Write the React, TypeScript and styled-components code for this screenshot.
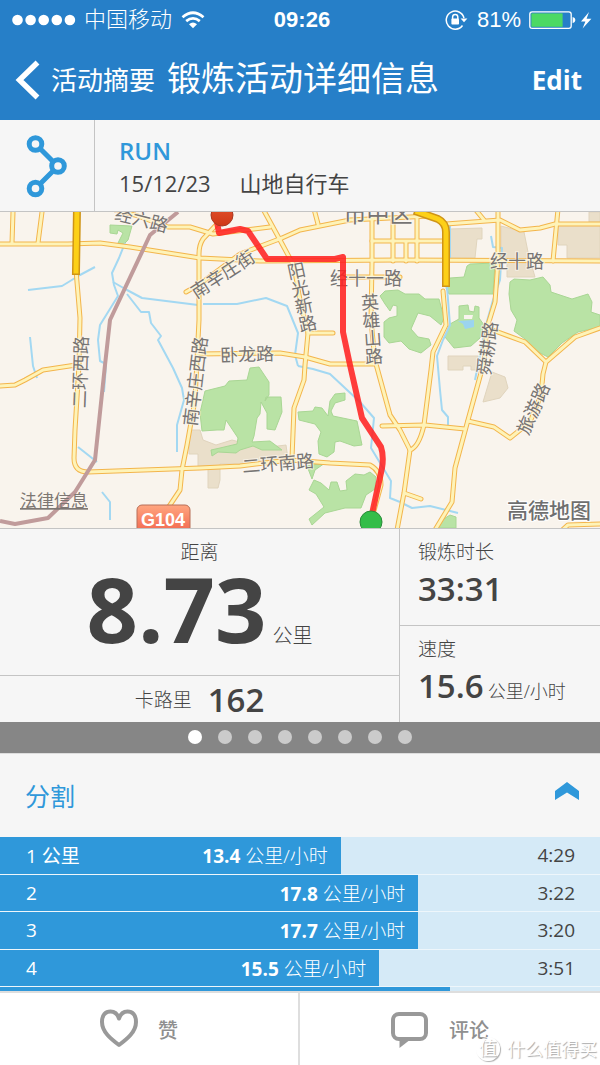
import React from "react";
import styled, { createGlobalStyle } from "styled-components";

const blue = "#2f98da";
const rule = "#c4c4c4";
const ink = "#444444";

const GlobalStyle = createGlobalStyle`
  *, *::before, *::after { box-sizing: border-box; }
  body {
    margin: 0;
    background: #f6f6f6;
    color: ${ink};
    font-family: "Open Sans", "Noto Sans CJK SC", sans-serif;
  }
  button, a, input { font: inherit; color: inherit; }
  button { border: 0; padding: 0; background: none; cursor: pointer; }
`;

const Screen = styled.div`
  display: flex;
  flex-direction: column;
  height: 100vh;
  position: relative;
  overflow: hidden;
`;

/* ---------- header ---------- */

const Header = styled.header`
  flex: none;
  height: 120px;
  background: #267fc8;
  color: #ffffff;
`;

const StatusBar = styled.div`
  display: grid;
  grid-template-columns: 1fr auto 1fr;
  align-items: center;
  height: 40px;
  padding: 0 8px 0 12px;
  font-family: "Liberation Sans", "Noto Sans CJK SC", sans-serif;
  font-size: 22px;
  line-height: 40px;
`;

const StatusGroup = styled.div<{ $end?: boolean }>`
  display: flex;
  align-items: center;
  justify-content: ${(p) => (p.$end ? "flex-end" : "flex-start")};
  gap: 8px;
`;

const Carrier = styled.span`
  font-weight: 300;
`;

const Clock = styled.time`
  font-weight: 700;
`;

const NavBar = styled.nav`
  display: flex;
  align-items: center;
  height: 80px;
  padding: 0 18px 0 15px;
`;

const BackLink = styled.a`
  display: flex;
  align-items: center;
  gap: 10px;
  font-size: 26px;
  line-height: 40px;
  text-decoration: none;
`;

const Title = styled.h1`
  flex: 1;
  margin: 0 0 4px 12px;
  font-size: 34px;
  line-height: 48px;
  font-weight: 400;
  white-space: nowrap;
`;

const EditButton = styled.button`
  && {
    font-size: 26px;
    font-weight: 700;
  }
`;

/* ---------- activity ---------- */

const Activity = styled.section`
  flex: none;
  display: flex;
  height: 92px;
  border-bottom: 1px solid ${rule};
`;

const ActivityIcon = styled.div`
  display: flex;
  justify-content: center;
  width: 95px;
  padding-top: 14px;
  border-right: 1px solid ${rule};
`;

const ActivityText = styled.div`
  padding: 15px 0 0 24px;
`;

const ActivityType = styled.h2`
  margin: 0;
  color: ${blue};
  font-size: 24px;
  line-height: 32px;
  font-weight: 600;
`;

const ActivityMeta = styled.p`
  display: flex;
  gap: 29px;
  margin: 0;
  font-size: 22px;
  line-height: 32px;
`;

/* ---------- map ---------- */

const MapView = styled.svg`
  flex: none;
  display: block;
  width: 100%;
  height: 316px;
  background: #f9f4ed;
`;

const MapText = styled.text<{ $stacked?: boolean; $size?: number }>`
  font-family: "Noto Sans CJK SC", sans-serif;
  font-size: ${(p) => p.$size ?? 18}px;
  font-weight: 400;
  fill: #777473;
  stroke: #fbf7f0;
  stroke-width: 2px;
  stroke-opacity: 0.7;
  paint-order: stroke;
  text-anchor: middle;
  dominant-baseline: central;
  writing-mode: ${(p) => (p.$stacked ? "vertical-rl" : "horizontal-tb")};
`;

type LabelSpec = {
  text: string;
  x: number;
  y: number;
  turn?: number;
  stacked?: boolean;
  size?: number;
};

const labels: LabelSpec[] = [
  { text: "经六路", x: 142, y: 218, turn: 14 },
  { text: "市中区", x: 378, y: 212, size: 23 },
  { text: "南辛庄街", x: 222, y: 273, turn: -33 },
  { text: "阳光新路", x: 302, y: 297, turn: -12, stacked: true },
  { text: "经十一路", x: 366, y: 277 },
  { text: "英雄山路", x: 372, y: 329, turn: -4, stacked: true },
  { text: "经十路", x: 517, y: 260 },
  { text: "卧龙路", x: 247, y: 353, turn: -2 },
  { text: "二环西路", x: 79, y: 372, turn: -88 },
  { text: "南辛庄西路", x: 194, y: 381, turn: -83 },
  { text: "二环南路", x: 278, y: 462, turn: -5 },
  { text: "舜耕路", x: 486, y: 348, turn: -82 },
  { text: "旅游路", x: 532, y: 408, turn: -66 },
];

const greens = [
  "M110 225L132 226L128 240L124 244L118 243L123 233L118 230L117 234L110 233Z",
  "M450 278L464 277L467 266L470 264L495 263L493 294L449 294L446 288Z",
  "M510 282L514 279L530 280L543 277L550 285L551 292L572 299L588 294L592 302L591 312L600 315V327L578 332L562 343L548 357L532 349L525 339L514 331L517 320L511 310L509 294Z",
  "M445 337L450 324L459 319L459 306L468 305L469 311L474 312L475 306L479 307L479 318L484 325L480 338L471 346L454 348Z",
  "M380 296L385 291L398 290L405 294L419 294L425 299L439 299L444 318L441 325L430 316L418 313L411 329L418 337L429 339L431 345L421 353L409 349L401 341L389 343L384 337L384 322L389 318L397 316L397 306L393 305L390 311L385 304Z",
  "M200 413L205 391L225 386L229 381L247 380L250 368L259 367L269 382L269 395L265 401L266 397L281 397L282 412L275 430L267 429L267 413L261 402L260 414L257 418L254 436L252 442L270 441L282 450L262 450L253 446L240 450L236 453L218 452L212 456L211 450L220 448L237 444L238 438L226 420L224 430L217 430L202 431Z",
  "M298 412L313 411L315 407L322 408L328 416L330 401L335 394L345 393L345 400L335 403L331 411L333 416L357 421L362 445L354 446L340 441L335 442L334 452L327 457L319 454L318 441L321 432L315 424L299 420Z",
  "M309 490L314 480L321 483L329 490L331 482L337 482L340 491L347 490L346 481L355 474L364 475L370 472L376 477L375 489L366 495L361 508L345 508L325 513L312 525L309 519L324 507L316 494Z",
  "M436 528L442 520L450 515L456 517L456 528Z",
  "M307 466L325 463L315 470L312 479Z",
];

const tans = [
  "M450 229L482 228V239H477L475 258H450Z",
  "M501 226L524 232L528 252L535 277H507V262H501Z",
  "M558 225H600V258H567V245H558Z",
  "M589 212H600V222H589Z",
  "M448 356H478V370H471V366H463V370H448Z",
  "M492 372L505 377L508 388L500 398L483 402Z",
  "M189 430H200L203 440L216 445L232 440L262 448L286 445L288 459L264 464L220 464V480L218 488H208V466L198 466V454H189Z",
];

const waters = [
  "M125 243L119 258L112 273L114 285L118 296L100 325L98 340L100 361L104 363",
  "M113 282L127 290L142 298L198 305",
  "M127 294L141 312H149L151 323L161 336L158 340L173 368L182 388L184 400L177 425V452",
  "M28 290L62 286L80 275L95 267",
  "M30 337L33 366L37 378",
  "M203 304H237L266 298L287 306L298 333L295 355L298 366",
  "M298 366L313 369L330 374L345 388L360 402L374 418L371 448L391 481L390 498L400 502",
  "M450 226V258M491 236L493 247L502 248L500 280L493 300L486 325L481 350L475 380",
  "M447 287L450 325L443 340L437 356L440 390L442 410L448 417V425",
  "M404 504L412 508L430 506L458 513",
  "M78 447L97 462M102 492L110 502V520",
  "M106 365L104 392",
];

const roads = [
  "M0 244H68L100 243L130 247L200 258L260 261L400 260L600 261",
  "M13 212L12 243M42 212L38 243",
  "M76 270L80 318L79 365L75 430L74 458Q74 472 88 472L200 468L240 466L290 460L330 463L370 465Q381 471 381 485L372 518",
  "M0 386L15 385L25 380L43 370L76 365",
  "M112 209L135 215L168 227L190 227L213 234L270 227",
  "M217 224L203 239Q199 245 199 254V320L195 400L187 445L182 470L180 490L168 508",
  "M186 292L200 284L240 254L282 238L300 230L350 220L430 216M446 224L500 220L520 230L540 228L555 224L600 224",
  "M263 209L280 240L294 266L300 300L308 333L305 365L304 380L294 408L292 458",
  "M314 209L318 224",
  "M308 333H333",
  "M372 218V262L371 320L375 362",
  "M393 218V261M372 241H446M406 241V261M417 209V261",
  "M340 277H400",
  "M198 354L280 353L305 357L330 364L376 364L390 415L400 430L410 450",
  "M443 291L446 325L433 352L431 370L424 425Q419 447 410 450L404 493L397 530M404 493L421 499",
  "M498 209V260L495 302L487 328L484 362L468 420L455 468L452 502L435 530",
  "M558 209L553 261M475 209L484 220",
  "M487 328L525 342L546 362L575 337L600 328M546 362L543 374L541 395L530 422L510 438L494 427L468 421",
  "M382 426L425 425L465 429",
  "M560 532L568 525L600 524",
];

const highways = ["M77 208L76 271", "M418 212L438 219Q446 223 446 232V283"];

const railway = "M178 212L150 235L110 320L105 365L95 460L75 492L48 518L15 524L0 521";

const route =
  "M217 222L219 233L240 229L248 231L267 259H335L343 257V332L350 365L362 418L381 447Q384 456 382 468L372 514";

function RouteMap() {
  return (
    <MapView viewBox="0 212 600 316" preserveAspectRatio="xMidYMid slice" role="img" aria-label="路线地图">
      <defs>
        <linearGradient id="shield" x1="0" y1="0" x2="0" y2="1">
          <stop offset="0" stopColor="#ffa680" />
          <stop offset="1" stopColor="#f05c46" />
        </linearGradient>
        <linearGradient id="redPin" x1="0" y1="0" x2="0" y2="1">
          <stop offset="0" stopColor="#e3532e" />
          <stop offset="1" stopColor="#cf3716" />
        </linearGradient>
      </defs>
      <g fill="#eadfca" stroke="#e0d4bd" strokeWidth="1">
        {tans.map((d) => <path key={d} d={d} />)}
      </g>
      <g fill="#b9e3a5" stroke="#a9d694" strokeWidth="1">
        {greens.map((d) => <path key={d} d={d} />)}
      </g>
      <path d="M464 315L473 315L472 319L464 319Z" fill="#f9f4ed" />
      <path d="M458 321L474 320L474 327L465 329L463 324Z" fill="#9bd4f0" />
      <g fill="none" stroke="#a3d8f2" strokeWidth="2" strokeLinejoin="round">
        {waters.map((d) => <path key={d} d={d} />)}
      </g>
      <g fill="none" stroke="#f3b54c" strokeWidth="5" strokeLinejoin="round" strokeLinecap="round">
        {roads.map((d) => <path key={d} d={d} />)}
      </g>
      <g fill="none" stroke="#fef3b8" strokeWidth="3" strokeLinejoin="round" strokeLinecap="round">
        {roads.map((d) => <path key={d} d={d} />)}
      </g>
      <path d={railway} fill="none" stroke="#c09b9b" strokeWidth="4" strokeLinejoin="round" />
      <g fill="none" strokeLinejoin="round" strokeLinecap="square">
        {highways.map((d) => <path key={d} d={d} stroke="#cf9416" strokeWidth="8" />)}
        {highways.map((d) => <path key={d + "f"} d={d} stroke="#fdd017" strokeWidth="5" />)}
      </g>
      {labels.map((l) => (
        <MapText
          key={l.text}
          $stacked={l.stacked}
          $size={l.size}
          transform={`translate(${l.x} ${l.y}) rotate(${l.turn ?? 0})`}
        >
          {l.text}
        </MapText>
      ))}
      <rect x="137" y="505" width="53" height="32" rx="5" fill="url(#shield)" stroke="#b86f58" strokeWidth="1" />
      <ShieldText x="163" y="526">G104</ShieldText>
      <path d={route} fill="none" stroke="#ff2020" strokeOpacity="0.87" strokeWidth="6" strokeLinejoin="round" />
      <circle cx="222" cy="215" r="11" fill="url(#redPin)" stroke="#a83a22" strokeWidth="1" />
      <circle cx="371" cy="522" r="11" fill="#34bd49" stroke="#2a8a38" strokeWidth="1" />
      <LegalText x="20" y="507">法律信息</LegalText>
      <BrandText x="507" y="518">高德地图</BrandText>
    </MapView>
  );
}

const ShieldText = styled.text`
  font-family: "Liberation Sans", sans-serif;
  font-size: 18px;
  font-weight: 700;
  fill: #ffffff;
  text-anchor: middle;
`;

const LegalText = styled.text`
  font-family: "Noto Sans CJK SC", sans-serif;
  font-size: 17px;
  fill: #7d7773;
  text-decoration: underline;
`;

const BrandText = styled.text`
  font-family: "Noto Sans CJK SC", sans-serif;
  font-size: 21px;
  font-weight: 500;
  fill: #6f6f6f;
  stroke: #ffffff;
  stroke-width: 2px;
  paint-order: stroke;
`;

/* ---------- metrics ---------- */

const Metrics = styled.section`
  flex: none;
  display: grid;
  grid-template-columns: 2fr 1fr;
  height: 194px;
  border-top: 1px solid ${rule};
`;

const MetricColumn = styled.div<{ $ruled?: boolean }>`
  display: flex;
  flex-direction: column;
  border-right: ${(p) => (p.$ruled ? `1px solid ${rule}` : "0")};
`;

const DistanceCell = styled.div`
  height: 147px;
  padding-top: 10px;
  border-bottom: 1px solid ${rule};
  text-align: center;
`;

const MetricLabel = styled.div`
  font-size: 19px;
  line-height: 26px;
  font-weight: 300;
`;

const DistanceValue = styled.div`
  font-size: 90px;
  line-height: 86px;
  font-weight: 700;
`;

const Unit = styled.span<{ $size: number }>`
  margin-left: 6px;
  font-size: ${(p) => p.$size}px;
  font-weight: 300;
`;

const CalorieCell = styled.div`
  flex: 1;
  display: flex;
  align-items: center;
  justify-content: center;
  gap: 16px;
`;

const MetricValue = styled.div`
  font-size: 33px;
  line-height: 48px;
  font-weight: 600;
  white-space: nowrap;

  ${Unit} { margin-left: 4px; }
`;

const SideCell = styled.div`
  height: 96px;
  padding: 10px 0 0 18px;

  & + & { border-top: 1px solid ${rule}; }
`;

const Pager = styled.div`
  flex: none;
  display: flex;
  justify-content: center;
  gap: 16px;
  height: 31px;
  padding-top: 8px;
  background: #868686;
`;

const PagerDot = styled.button<{ $on: boolean }>`
  width: 14px;
  height: 14px;
  border-radius: 50%;
  background: ${(p) => (p.$on ? "#ffffff" : "#cbcbcb")};
`;

/* ---------- splits ---------- */

const SplitsHeader = styled.div`
  flex: none;
  display: flex;
  align-items: center;
  justify-content: space-between;
  height: 84px;
  padding: 0 20px 0 25px;
  border-top: 1px solid #dddddd;
`;

const SplitsTitle = styled.h2`
  margin: 0;
  color: ${blue};
  font-size: 25px;
  line-height: 36px;
  font-weight: 400;
`;

const CollapseButton = styled.button`
  display: flex;
  padding-bottom: 10px;
`;

const SplitsScroller = styled.div`
  flex: 1;
  min-height: 0;
  overflow-y: auto;
  scrollbar-width: none;
`;

const SplitsTable = styled.table`
  display: block;
  font-size: 19px;
`;

const SplitsBody = styled.tbody`
  display: grid;
  grid-auto-rows: 1fr;
  height: 188px;
`;

const SplitRow = styled.tr<{ $bar: number }>`
  display: grid;
  grid-template-columns: 120px calc(${(p) => p.$bar}% - 120px) 1fr;
  align-items: center;
  border-bottom: 1px solid #eef6fb;
  background: linear-gradient(90deg, ${blue} ${(p) => p.$bar}%, #d5eaf7 ${(p) => p.$bar}%);
`;

const LapCell = styled.th`
  padding: 0 0 0 26px;
  color: #ffffff;
  font-weight: 400;
  text-align: left;
`;

const SpeedCell = styled.td`
  padding: 0 13px 0 0;
  color: #ffffff;
  font-weight: 300;
  text-align: right;
  white-space: nowrap;

  b { font-weight: 700; }
`;

const TimeCell = styled.td`
  padding: 0 25px 0 0;
  text-align: right;
`;

const splits = [
  { lap: "1 公里", speed: "13.4", time: "4:29", bar: 56.8 },
  { lap: "2", speed: "17.8", time: "3:22", bar: 69.7 },
  { lap: "3", speed: "17.7", time: "3:20", bar: 69.7 },
  { lap: "4", speed: "15.5", time: "3:51", bar: 63.2 },
  { lap: "5", speed: "19.2", time: "3:07", bar: 75 },
];

/* ---------- footer ---------- */

const Footer = styled.footer`
  flex: none;
  display: grid;
  grid-template-columns: 1fr 1fr;
  height: 74px;
  border-top: 2px solid #dedede;
  background: #ffffff;
`;

const FooterButton = styled.button`
  display: flex;
  align-items: center;
  justify-content: center;
  gap: 20px;

  && {
    padding-right: 20px;
    color: #8f8f8f;
    font-size: 20px;
    font-weight: 500;
  }
  &:first-child { border-right: 2px solid #dedede; }
`;

const Watermark = styled.div`
  position: absolute;
  right: 3px;
  bottom: 3px;
  display: flex;
  align-items: center;
  gap: 7px;
  color: #ffffff;
  font-size: 18px;
  line-height: 26px;
  text-shadow: 1px 1px 1px #a8a8a8;
`;

const WatermarkSeal = styled.span`
  width: 24px;
  height: 24px;
  border: 1px solid #ffffff;
  border-radius: 50%;
  box-shadow: 1px 1px 1px #b0b0b0;
  line-height: 20px;
  text-align: center;
`;

export default function App() {
  return (
    <Screen>
      <GlobalStyle />
      <Header>
        <StatusBar>
          <StatusGroup>
            <svg width="64" height="12" viewBox="0 0 64 12" fill="#fff" aria-hidden="true">
              {[0, 1, 2, 3, 4].map((i) => (
                <circle key={i} cx={5.5 + i * 13.1} cy="6" r="5.3" />
              ))}
            </svg>
            <Carrier>中国移动</Carrier>
            <svg width="26" height="18" viewBox="0 0 24 18" fill="none" stroke="#fff" strokeWidth="2.8" aria-hidden="true">
              <path d="M1.500 6.200Q12 -2.600 22.500 6.200" />
              <path d="M5.200 10.200Q12 4.600 18.800 10.200" />
              <path d="M8 13.200Q12 10 16 13.200L12 17.200Z" fill="#fff" stroke="none" />
            </svg>
          </StatusGroup>
          <Clock>09:26</Clock>
          <StatusGroup $end>
            <svg width="24" height="22" viewBox="0 0 24 22" fill="none" stroke="#fff" strokeWidth="1.5" aria-hidden="true">
              <path d="M19 9A9 9 0 1 0 17.500 16.500" />
              <path d="M15.600 9.400H22.400L19 13.200Z" fill="#fff" stroke="none" />
              <path d="M7.600 10V8a2.600 2.600 0 0 1 5.200 0V10" />
              <rect x="6.4" y="9.6" width="7.6" height="6" rx="0.8" fill="#fff" stroke="none" />
            </svg>
            <span>81%</span>
            <svg width="63" height="20" viewBox="0 0 63 20" fill="none" aria-hidden="true">
              <rect x="0.8" y="1.8" width="41.4" height="16.6" rx="2.4" stroke="#fff" strokeWidth="1.3" />
              <rect x="2.4" y="3.4" width="31.2" height="13.4" fill="#4cd964" />
              <path d="M43.600 7Q46.400 7.600 46.400 10T43.600 13.200Z" fill="#fff" />
              <path d="M60 2L52 11.400H56.400L53.600 18.400L62.400 8.800H57.600Z" fill="#fff" />
            </svg>
          </StatusGroup>
        </StatusBar>
        <NavBar>
          <BackLink href="#summary">
            <svg width="26" height="40" viewBox="0 0 26 40" fill="none" stroke="#fff" strokeWidth="5.5" aria-hidden="true">
              <path d="M22.500 2.500L4.500 20L22.500 37.500" />
            </svg>
            活动摘要
          </BackLink>
          <Title>锻炼活动详细信息</Title>
          <EditButton type="button">Edit</EditButton>
        </NavBar>
      </Header>

      <Activity>
        <ActivityIcon>
          <svg width="42" height="64" viewBox="0 0 42 64" fill="none" stroke={blue} strokeWidth="5" aria-hidden="true">
            <path d="M14 14.500L27 27.500M27 37L14 50" />
            <circle cx="9.5" cy="10" r="6.3" />
            <circle cx="32" cy="32" r="6.3" />
            <circle cx="9.5" cy="54.5" r="6.3" />
          </svg>
        </ActivityIcon>
        <ActivityText>
          <ActivityType>RUN</ActivityType>
          <ActivityMeta>
            <time>15/12/23</time>
            <span>山地自行车</span>
          </ActivityMeta>
        </ActivityText>
      </Activity>

      <RouteMap />

      <Metrics>
        <MetricColumn $ruled>
          <DistanceCell>
            <MetricLabel>距离</MetricLabel>
            <DistanceValue>
              8.73<Unit $size={20}>公里</Unit>
            </DistanceValue>
          </DistanceCell>
          <CalorieCell>
            <MetricLabel>卡路里</MetricLabel>
            <MetricValue>162</MetricValue>
          </CalorieCell>
        </MetricColumn>
        <MetricColumn>
          <SideCell>
            <MetricLabel>锻炼时长</MetricLabel>
            <MetricValue>33:31</MetricValue>
          </SideCell>
          <SideCell>
            <MetricLabel>速度</MetricLabel>
            <MetricValue>
              15.6<Unit $size={18}>公里/小时</Unit>
            </MetricValue>
          </SideCell>
        </MetricColumn>
      </Metrics>

      <Pager>
        {[1, 2, 3, 4, 5, 6, 7, 8].map((n) => (
          <PagerDot key={n} type="button" $on={n === 1} aria-label={`第 ${n} 页`} />
        ))}
      </Pager>

      <SplitsHeader>
        <SplitsTitle>分割</SplitsTitle>
        <CollapseButton type="button" aria-label="收起">
          <svg width="26" height="18" viewBox="0 0 26 18" fill={blue} aria-hidden="true">
            <path d="M1 9L13 0L25 9V18L13 10.500L1 18Z" />
          </svg>
        </CollapseButton>
      </SplitsHeader>
      <SplitsScroller>
        <SplitsTable>
          <SplitsBody>
            {splits.map((s) => (
              <SplitRow key={s.lap} $bar={s.bar}>
                <LapCell scope="row">{s.lap}</LapCell>
                <SpeedCell>
                  <b>{s.speed}</b> 公里/小时
                </SpeedCell>
                <TimeCell>{s.time}</TimeCell>
              </SplitRow>
            ))}
          </SplitsBody>
        </SplitsTable>
      </SplitsScroller>

      <Footer>
        <FooterButton type="button">
          <svg width="38" height="40" viewBox="0 0 38 40" fill="none" stroke="#999" strokeWidth="4" strokeLinejoin="round" aria-hidden="true">
            <path d="M19 36C11 30 2 23 2 13C2 6 5.500 2.500 10.500 2.500C14.500 2.500 17.500 5 19 9.500C20.500 5 23.500 2.500 27.500 2.500C32.500 2.500 36 6 36 13C36 23 27 30 19 36Z" />
          </svg>
          赞
        </FooterButton>
        <FooterButton type="button">
          <svg width="38" height="40" viewBox="0 0 38 40" fill="none" stroke="#999" strokeWidth="4" aria-hidden="true">
            <rect x="2" y="5" width="33" height="25" rx="6" />
            <path d="M8.500 30V39L20 30Z" fill="#999" stroke="none" />
          </svg>
          评论
        </FooterButton>
      </Footer>

      <Watermark>
        <WatermarkSeal>值</WatermarkSeal>
        什么值得买
      </Watermark>
    </Screen>
  );
}
